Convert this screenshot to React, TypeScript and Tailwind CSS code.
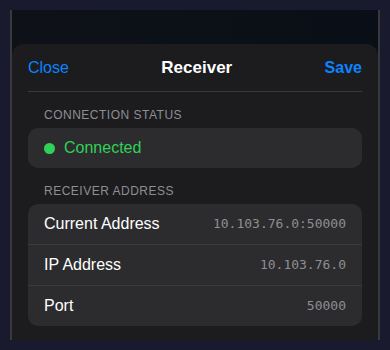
import React from "react";

type Row = { label: string; value: string };

const ROWS: Row[] = [
  { label: "Current Address", value: "10.103.76.0:50000" },
  { label: "IP Address", value: "10.103.76.0" },
  { label: "Port", value: "50000" },
];

function SectionLabel({ children }: { children: React.ReactNode }) {
  return (
    <div className="px-4 text-[12px] leading-4 tracking-[0.5px] uppercase text-[#8e8e93]">
      {children}
    </div>
  );
}

export default function App() {
  return (
    <div className="h-[350px] w-[390px] bg-[#1a1a2e] p-[10px] font-['Liberation_Sans',Arial,sans-serif]">
      <div className="flex h-[330px] flex-col border-x-2 border-[#3a3a3c] bg-gradient-to-r from-[#0e1218] to-[#0a0e16]">
        <div className="h-[34px] shrink-0" />
        <div className="flex flex-1 flex-col rounded-t-[12px] bg-[#1c1c1e]">
          <div className="mx-4 flex h-[48px] items-center justify-between border-b border-[#38383a]">
            <button className="text-[16px] text-[#0a84ff]">Close</button>
            <span className="text-[17px] font-bold text-white">Receiver</span>
            <button className="text-[16px] font-bold text-[#0a84ff]">Save</button>
          </div>

          <div className="mx-4 mt-[15px]">
            <SectionLabel>Connection Status</SectionLabel>
            <div className="mt-[5px] flex h-10 items-center gap-[9px] rounded-[10px] bg-[#2c2c2e] px-4">
              <span className="h-[11px] w-[11px] rounded-full bg-[#30d158]" />
              <span className="text-[16px] text-[#30d158]">Connected</span>
            </div>
          </div>

          <div className="mx-4 mt-[15px]">
            <SectionLabel>Receiver Address</SectionLabel>
            <div className="mt-[5px] overflow-hidden rounded-[10px] bg-[#2c2c2e]">
              {ROWS.map((row, i) => (
                <div
                  key={row.label}
                  className={`flex items-center justify-between pl-4 pr-4 ${
                    i > 0 ? "h-[41px] border-t border-[#3a3a3c]" : "h-10"
                  }`}
                >
                  <span className="text-[16px] text-white">{row.label}</span>
                  <span className="font-['DejaVu_Sans_Mono',monospace] text-[13px] text-[#8e8e93]">
                    {row.value}
                  </span>
                </div>
              ))}
            </div>
          </div>
        </div>
      </div>
    </div>
  );
}
